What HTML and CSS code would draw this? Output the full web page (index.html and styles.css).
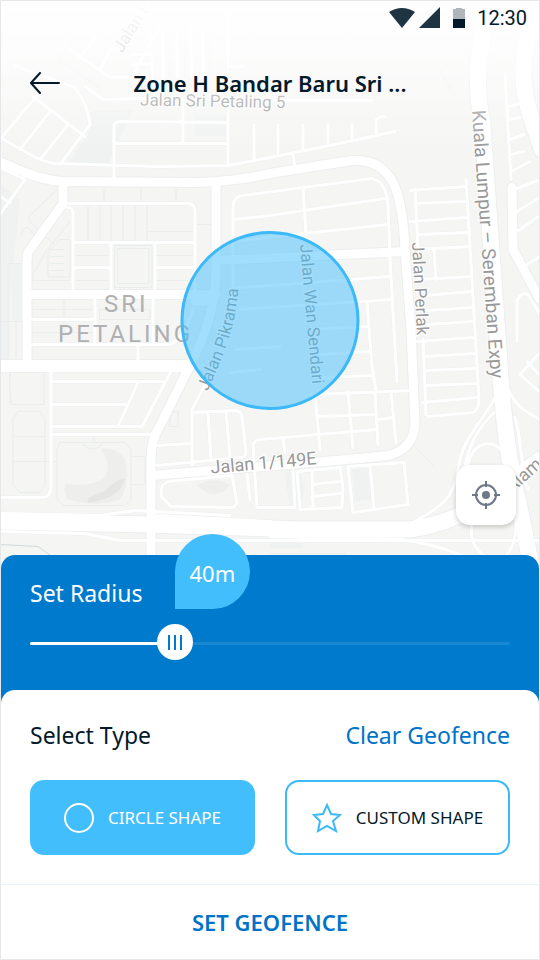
FILE: index.html
```html
<!doctype html>
<html lang="en">
<head>
    <meta charset="UTF-8">
    <meta name="viewport" content="width=device-width, initial-scale=1.0">
    <title>Set Geofence</title>
    <link rel="stylesheet" href="styles.css">
</head>
<body>
<div class="screen">
    <main class="map">
        <svg class="map_canvas" viewBox="1 1 538 569" preserveAspectRatio="xMidYMid slice" aria-hidden="true">
            <defs>
                <linearGradient id="fade" x1="0" y1="0" x2="0" y2="1">
                    <stop offset="0" stop-color="#fff"/>
                    <stop offset="0.25" stop-color="#fff" stop-opacity="0.85"/>
                    <stop offset="1" stop-color="#fff" stop-opacity="0"/>
                </linearGradient>
                <path id="pikrama" d="M208 392C216 368 236 340 239 280"/>
                <!-- narrow streets -->
                <g id="streets">
                    <path d="M0 138L30 155Q42 162 55 164L160 167 228 166 270 158 330 146 395 132M14 66L75 88Q88 105 90 125L60 165M33 97L85 137M0 140L36 97M20 150L50 112M40 160L68 125M85 87L103 100 180 98M275 101H372"/>
                    <path d="M114 180V128Q114 122 120 122L228 123M115 144H228M183 100V144M228 12V165M254 125V160M278 125V153M303 125V150M328 125V146M352 125V142M376 134V122Q376 117 385 117M293 156L295 168"/>
                    <path d="M70 50L110 78H132L160 25M80 58L95 38M100 70L112 48M150 30L152 78M163 28V78M177 28V78M190 28L192 78M203 28V78M133 65H152M133 55H152M230 67H243"/>
                    <path d="M0 168L25 180 0 215M0 197L10 203"/>
                    <path d="M64 204H188Q195 204 195 212V290M62 208Q73 206 73 214V290M73 243H195M111 243V290M155 243V290M73 268H111M155 268H195M30 320H95M95 300V345M30 345H170Q184 340 193 310M138 345V362M153 300V345"/>
                    <path d="M51 370V488Q50 498 44 498H0M52 382H165M52 405H125M52 427H140M138 383L118 427M172 370L142 427M52 435H150M0 371H190"/>
                    <path d="M206 383L192 410V465M192 413L236 411Q241 411 242 417L246 453Q246 458 240 458L157 466M208 412L211 460M226 412L230 458M157 446L192 444"/>
                    <path d="M168 482L232 476 237 503Q236 508 230 508L171 507 161 497 162 486ZM247 475L250 500M253 446Q254 441 260 440L377 430M257 508L253 446M257 508H295M283 439L285 453"/>
                    <path d="M315 395L320 450M348 393L353 448M373 370L376 393M391 392L396 443M318 417L375 415M312 395L415 391M320 378L372 376M375 392L378 445M378 420L393 418"/>
                    <path d="M297 472L340 468 343 488 342 508 300 510ZM312 472L313 508M312 485L340 482M312 497L340 494M348 467L404 463 408 505 353 513ZM370 465L374 510M293 470L295 508"/>
                    <path d="M233 287V208Q233 197 243 196L372 179Q386 182 388 205L390 260 397 382M235 220L270 216 385 199M303 187L306 235M240 241L388 225M230 289L390 277M240 310L392 300M367 302L373 380M310 330L367 327M320 355L370 352M235 350L280 347M230 373L260 370"/>
                    <path d="M410 191L466 187M415 204L466 202M410 222L468 218M418 235L470 233M415 190L418 250 470 247M434 250L436 280M418 280L472 277M425 296L472 292M427 311L472 308M427 325L473 322M417 342L474 338M425 357L475 354M425 371L476 369M466 180L479 398Q479 412 472 413L428 417M423 340L426 415M425 386L477 384M422 403L477 398"/>
                    <path d="M505 75L511 180M508 107L518 105M509 120L520 118M510 140L524 135M511 155L524 152M511 172L530 162M512 191L540 180M517 212L540 198M517 232L540 216M527 265L540 257M517 342V302Q520 292 528 295L540 315M540 353L520 375 540 393M527 362L540 376"/>
                    <path d="M498 392C490 415 462 435 458 470S430 512 410 525M494 413C475 432 470 445 464 470M468 465C474 440 494 440 502 452M504 380C512 405 525 412 540 420M515 418C522 440 520 465 528 490M270 537L400 540Q430 543 462 556M472 524C468 545 480 553 488 560M516 524C516 545 510 550 505 558"/>
                    <path d="M0 532L85 534 120 541 540 541M0 514L100 516 135 511 230 516M157 516L270 522"/>
                </g>
                <!-- collector roads -->
                <g id="roads">
                    <path d="M0 162L25 173Q42 180 62 182L200 183Q235 182 270 174L345 162Q380 156 394 185 403 205 405 250L411 330 415 425Q413 450 388 456 350 460 300 464L151 476"/>
                    <path d="M63 183V204L30 250Q27 252 27 262V365M0 365H190M216 183V265Q217 315 190 366L159 428Q151 440 151 460V558M30 295H216M216 261L405 252M195 302H212"/>
                    <path d="M512 188L513 250 540 300"/>
                </g>
                <!-- expressways -->
                <g id="highways">
                    <path d="M0 522L150 525 300 530H410Q445 525 475 508L540 460"/>
                    <path d="M484 30Q473 80 482 120L492 260 500 370Q505 450 520 510L532 570"/>
                    <path d="M532 20Q516 70 530 115L542 150"/>
                </g>
            </defs>

            <rect class="land" width="540" height="572"/>
            <path class="park" d="M86 112L133 110 108 165 68 164 88 135ZM195 116H228V136H195ZM283 465L300 472 305 490 300 508H290ZM352 470L370 468 372 500 355 502ZM270 542H303V549H270ZM0 185L20 200 10 300V360H0ZM12 264H24V320H12Z"/>
            <path class="hill" d="M101 449Q118 448 125 460 130 485 120 500 95 508 68 500 62 490 66 484 90 488 105 478 112 465 101 449Z"/>
            <path class="hill_dark" d="M125 479Q120 500 88 503 84 498 104 492 116 480 125 479Z"/>
            <path class="hill" d="M197 486Q213 476 230 485 222 498 206 493Z"/>
            <path class="parcel" d="M104 190V203M141 190V203M176 190V203M88 206V241M100 206V241M111 206V241M123 206V241M135 206V241M147 206V241M147 232H194M76 256H110M76 281H110M157 256H194M157 281H194M197 225H214M115 246H152V288H115ZM118 249H149V284H118ZM30 310H95M64 300V338M30 333H95M100 310H150V320H100Z"/>
            <path class="parcel" d="M60 187L28 218 32 224 54 245M70 222L46 252 33 275V281H70M48 277V253L60 240H70V277ZM50 250H64M50 257H64M50 264H64M50 271H64M8 264H22M8 264V360M16 320V360M0 322H26M21 235Q27 220 33 235"/>
            <path class="parcel" d="M10 373H44V405H12Q9 400 10 373ZM18 412H40L45 420V485L40 493H20L13 485V420ZM13 437H45M13 462H57M60 443H125L131 450V500L125 506H64L57 500V450ZM82 444Q92 456 103 444M94 435V443M131 457H145V485H131M171 412H178V427H170Z"/>
            <path class="parcel" d="M62 15L72 48 58 60 100 88M150 22V78M170 18V78M185 15V78M210 15V78M345 30V45M440 70L450 90M415 447L433 466M398 560H345V554H270"/>
            <path class="stream" d="M0 545L38 547 52 557"/>

            <use href="#streets" class="street_case"/>
            <use href="#roads" class="road_case"/>
            <use href="#highways" class="highway_case"/>
            <use href="#streets" class="street"/>
            <use href="#roads" class="road"/>
            <use href="#highways" class="highway"/>

            <g class="place">
                <text x="104" y="312">SRI</text>
                <text x="58" y="342">PETALING</text>
            </g>
            <g class="road_name">
                <text transform="translate(140 106) rotate(1)">Jalan Sri Petaling 5</text>
                <text transform="translate(122 54) rotate(-58)">Jalan P</text>
                <text transform="translate(412 243) rotate(87)">Jalan Perlak</text>
                <text transform="translate(300 245) rotate(85)">Jalan Wan Sendari</text>
                <text><textPath href="#pikrama">Jalan Pikrama</textPath></text>
            </g>
            <g class="road_name road_name-large">
                <text transform="translate(472 111) rotate(86)">Kuala Lumpur – Seremban Expy</text>
                <text class="road_name-medium" transform="translate(211 474) rotate(-5)">Jalan 1/149E</text>
                <text class="road_name-medium" transform="translate(512 494) rotate(-42)">Alam</text>
            </g>
            <rect width="540" height="150" fill="url(#fade)"/>
            <circle class="fence" cx="270" cy="321" r="88"/>
        </svg>

        <div class="status">
            <svg width="78" height="22" viewBox="0 0 78 22" aria-hidden="true">
                <path fill="#1f3442" d="M0 5Q13-3 26 5L13 21ZM30 21L51 0V21Z"/>
                <path fill="#b0b7bc" d="M67 1H73V2H76V12H64V2H67Z"/>
                <path fill="#04192a" d="M64 12H76V21H64Z"/>
            </svg>
            <time>12:30</time>
        </div>

        <header class="header">
            <button class="back" type="button" aria-label="Back">
                <svg width="30" height="22" viewBox="0 0 30 22">
                    <path d="M10 1L1 11L10 21M1 11H29"/>
                </svg>
            </button>
            <h1 class="title">Zone H Bandar Baru Sri ...</h1>
        </header>

        <button class="locate" type="button" aria-label="My location">
            <svg width="28" height="28" viewBox="0 0 28 28">
                <circle cx="14" cy="14" r="10"/>
                <path d="M14 0V6M14 22V28M0 14H6M22 14H28"/>
                <circle class="locate_dot" cx="14" cy="14" r="4"/>
            </svg>
        </button>
    </main>

    <section class="panel">
        <div class="radius" style="--ratio: 0.2857">
            <label class="label" for="radius">Set Radius</label>
            <div class="slider">
                <input id="radius" type="range" min="0" max="140" value="40">
                <output class="bubble" for="radius">40m</output>
            </div>
        </div>

        <div class="sheet">
            <div class="sheet_head">
                <h2 class="label">Select Type</h2>
                <a class="label clear" href="#">Clear Geofence</a>
            </div>
            <div class="types">
                <button class="type type-active" type="button">
                    <svg width="30" height="30" viewBox="0 0 30 30">
                        <circle cx="15" cy="15" r="14"/>
                    </svg>
                    Circle shape
                </button>
                <button class="type" type="button">
                    <svg width="30" height="30" viewBox="0 0 30 30">
                        <path d="M15 2L19 11L28 12L21 18L24 28L15 23L6 28L8 18L2 12L11 11Z"/>
                    </svg>
                    Custom shape
                </button>
            </div>
            <button class="submit" type="button">Set Geofence</button>
        </div>
    </section>
</div>

<script>
    (function() {
        const radiusElem = document.querySelector('#radius');
        const bubbleElem = document.querySelector('.bubble');
        const typeElems = document.querySelectorAll('.type');

        radiusElem.addEventListener('input', function() {
            radiusElem.closest('.radius').style.setProperty('--ratio', radiusElem.value / radiusElem.max);
            bubbleElem.textContent = radiusElem.value + 'm';
        });

        typeElems.forEach(function(elem) {
            elem.addEventListener('click', function() {
                document.querySelector('.type-active').classList.remove('type-active');
                elem.classList.add('type-active');
            });
        });
    })();
</script>
</body>
</html>
```

FILE: styles.css
```css
* {
    box-sizing: border-box;
}

body {
    margin: 0;
    font-family: "Noto Sans", "Open Sans", sans-serif;
    color: #04192a;
    background: #fff;
}

button {
    padding: 0;
    border: 0;
    background: none;
    font: inherit;
    color: inherit;
    cursor: pointer;
}

svg {
    display: block;
    flex: none;
}

.screen {
    display: flex;
    flex-direction: column;
    min-height: 100vh;
    border: 1px solid #e6e7e8;
}

/* map */
.map {
    position: relative;
    display: flex;
    flex-direction: column;
    flex: 1;
    min-height: 400px;
    overflow: hidden;
}

.map_canvas {
    position: absolute;
    left: 0;
    top: 0;
    width: 100%;
    height: 100%;
}

.map_canvas path,
.map_canvas use {
    stroke-linejoin: round;
    stroke-linecap: round;
}

.land { fill: #f5f5f4; }
.park { fill: #f0f2f1; }
.hill { fill: #eeeeed; }
.hill_dark { fill: #e5e5e4; }
.parcel { fill: none; stroke: #e9edec; stroke-width: 1; }
.stream { fill: none; stroke: #d3d9da; stroke-width: 1; }

.street, .street_case, .road, .road_case, .highway, .highway_case {
    fill: none;
    stroke: #fff;
}

.street { stroke-width: 3; }
.road { stroke-width: 9; }
.highway { stroke-width: 16; }
.street_case { stroke: #eef1f0; stroke-width: 4; }
.road_case { stroke: #ebefee; stroke-width: 11; }
.highway_case { stroke: #ebefee; stroke-width: 18; }

.place {
    font-size: 24px;
    letter-spacing: 3px;
    fill: #b0b0b0;
}

.place, .road_name {
    font-family: Roboto, sans-serif;
}

.road_name {
    font-size: 17px;
    fill: #999;
    stroke: #fff;
    stroke-width: 2;
    paint-order: stroke;
}

.road_name-large {
    font-size: 19px;
}

.road_name-medium {
    font-size: 18px;
}

.fence {
    fill: #43befc;
    fill-opacity: 0.5;
    stroke: #3bb9f8;
    stroke-width: 3;
}

.status {
    position: relative;
    display: flex;
    justify-content: flex-end;
    align-items: center;
    gap: 10px;
    padding: 5px 12px 0 0;
    font: 20px/24px Roboto, sans-serif;
}

.header {
    position: relative;
    display: grid;
    grid-template-columns: 30px 1fr 30px;
    align-items: center;
    padding: 36px 29px 0;
}

.back path {
    fill: none;
    stroke: #04192a;
    stroke-width: 2;
    stroke-linecap: round;
}

.title {
    margin: 0;
    font-size: 22px;
    font-weight: 600;
    line-height: 34px;
    text-align: center;
}

.locate {
    position: relative;
    display: grid;
    place-items: center;
    width: 60px;
    height: 60px;
    margin: auto 23px 44px auto;
    border-radius: 14px;
    background: #fff;
    box-shadow: 0 2px 5px rgba(0, 0, 0, 0.2);
}

.locate svg {
    fill: none;
    stroke: #6d7888;
    stroke-width: 2;
}

.locate .locate_dot {
    fill: #6d7888;
    stroke: none;
}

/* bottom panel, its corners lie over the map */
.panel {
    position: relative;
    margin-top: -14px;
    border-radius: 14px 14px 0 0;
    background: #007acc;
}

.label {
    margin: 0;
    font-size: 23px;
    font-weight: 400;
    line-height: 32px;
}

.radius {
    padding: 22px 29px 29px;
    color: #fff;
}

.radius .label {
    display: block;
}

.slider {
    position: relative;
    height: 36px;
    margin-top: 16px;
}

.slider input {
    display: block;
    width: 100%;
    height: 36px;
    margin: 0;
    appearance: none;
    background: none;
}

.slider input::-webkit-slider-runnable-track {
    height: 3px;
    border-radius: 2px;
    background: linear-gradient(to right, #fff calc(18px + (100% - 36px) * var(--ratio)), #1a87d1 0);
}

.slider input::-webkit-slider-thumb {
    appearance: none;
    width: 36px;
    height: 36px;
    margin-top: -18px;
    border-radius: 50%;
    background:
        linear-gradient(#007acc, #007acc) 11px 11px / 2px 15px no-repeat,
        linear-gradient(#007acc, #007acc) 17px 11px / 2px 15px no-repeat,
        linear-gradient(#007acc, #007acc) 23px 11px / 2px 15px no-repeat,
        #fff;
}

.bubble {
    position: absolute;
    left: calc(18px + (100% - 36px) * var(--ratio));
    bottom: 52px;
    width: 75px;
    height: 75px;
    border-radius: 50% 50% 50% 0;
    background: #43befc;
    font-size: 22px;
    line-height: 79px;
    text-align: center;
}

.sheet {
    border-radius: 14px 14px 0 0;
    background: #fff;
}

.sheet_head {
    display: flex;
    justify-content: space-between;
    padding: 29px 29px 0;
}

.clear {
    color: #0073c8;
    text-decoration: none;
}

.types {
    display: grid;
    grid-template-columns: 1fr 1fr;
    gap: 30px;
    padding: 29px;
}

.type {
    display: flex;
    align-items: center;
    justify-content: center;
    gap: 14px;
    height: 75px;
    border: 2px solid #3bb9f8;
    border-radius: 14px;
    font-size: 17px;
    text-transform: uppercase;
}

.type svg {
    fill: none;
    stroke: #3bb9f8;
    stroke-width: 2;
}

.type-active {
    border-color: #43befc;
    background: #43befc;
    color: #fff;
}

.type-active svg {
    stroke: #fff;
}

.submit {
    display: block;
    width: 100%;
    height: 75px;
    border-top: 1px solid #eaf2f9;
    color: #0073c8;
    font-size: 22px;
    font-weight: 600;
    text-transform: uppercase;
}
```
